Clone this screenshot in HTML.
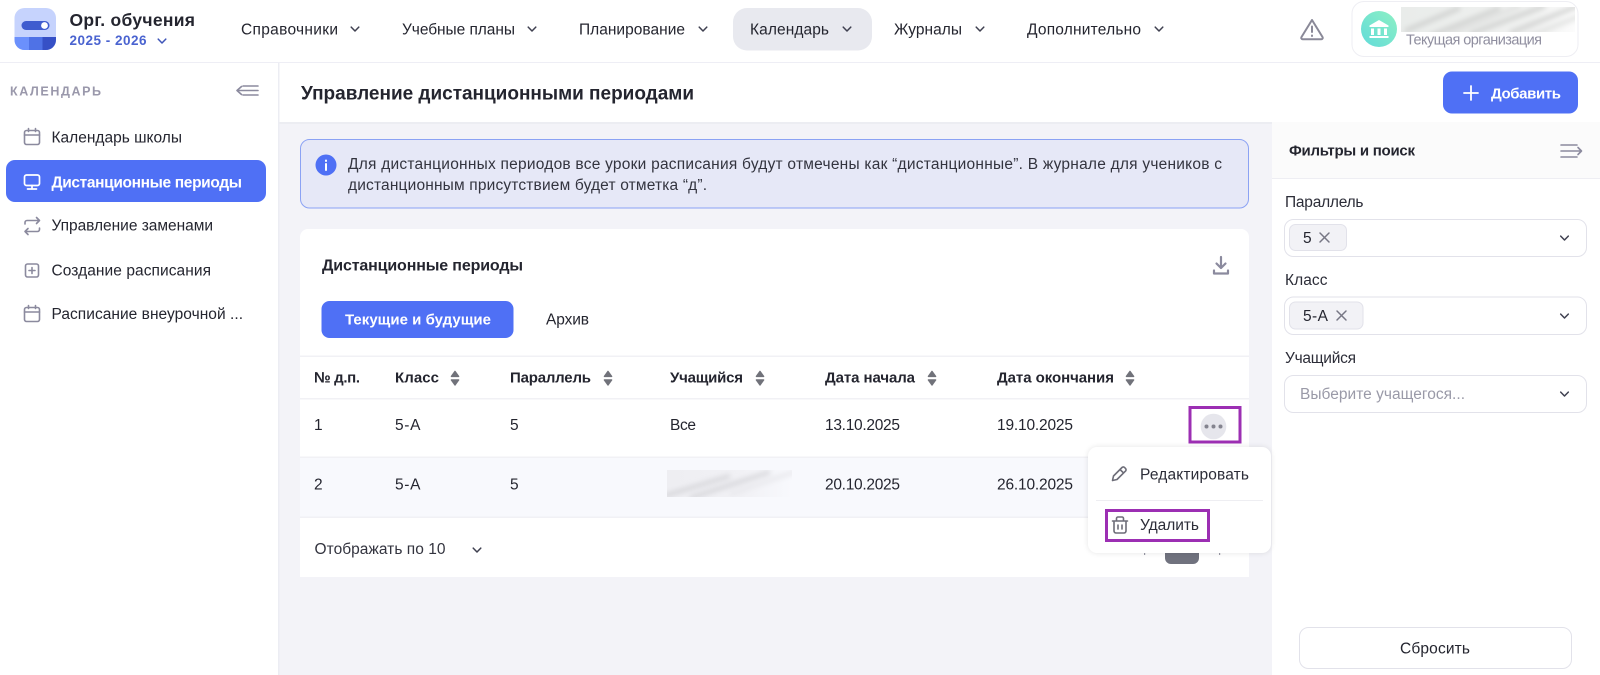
<!DOCTYPE html>
<html lang="ru"><head><meta charset="utf-8"><title>Управление дистанционными периодами</title>
<style>
html,body{margin:0;padding:0;background:#fff;width:1600px;height:675px;overflow:hidden}
svg{display:block;font-family:"Liberation Sans",sans-serif;filter:blur(.35px)}
text{fill:#24252f;font-size:15.5px;stroke:none}
.b{font-weight:700}
.ic{fill:none;stroke:#8b8a9e;stroke-width:1.6;stroke-linecap:round;stroke-linejoin:round}
.ch{fill:none;stroke:#3f4050;stroke-width:1.5;stroke-linecap:round;stroke-linejoin:round}
</style></head><body>
<svg width="1600" height="675" viewBox="0 0 1600 675" xmlns="http://www.w3.org/2000/svg">
<defs>
<filter id="bl" x="-10%" y="-30%" width="120%" height="160%"><feGaussianBlur stdDeviation="2.6"/></filter>
<clipPath id="orgclip"><rect x="1401" y="7" width="174" height="25"/></clipPath>
<clipPath id="stuclip"><rect x="667" y="470" width="125" height="27"/></clipPath>
<clipPath id="logoclip"><rect x="14.5" y="8" width="41.5" height="42" rx="10"/></clipPath>
<linearGradient id="av" x1="0" y1="1" x2="1" y2="0"><stop offset="0" stop-color="#62dbd9"/><stop offset="1" stop-color="#8df0c4"/></linearGradient>
<linearGradient id="orgbg" x1="0" y1="0" x2="1" y2="0"><stop offset="0" stop-color="#e9ecea"/><stop offset=".75" stop-color="#f0f1f0"/><stop offset="1" stop-color="#fcfcfc"/></linearGradient>
<linearGradient id="stubg" x1="0" y1="0" x2="1" y2="0"><stop offset="0" stop-color="#eeeef2"/><stop offset=".6" stop-color="#f1f1f5"/><stop offset="1" stop-color="#f8f9fd"/></linearGradient>
<g id="chev"><path d="M-3.8 -1.9 L0 2 L3.8 -1.9"/></g>
<g id="sort"><path d="M0 -6.6 L3.6 -1.6 H-3.6 Z M0 7 L3.6 2 H-3.6 Z" fill="#71727a" stroke="#71727a" stroke-width="1.4" stroke-linejoin="round"/></g>
<g id="cal"><rect x="-7.5" y="-6.5" width="15" height="14" rx="2"/><path d="M-7.5 -2 H7.5 M-3.5 -8.5 V-5.5 M3.5 -8.5 V-5.5"/></g>
</defs>

<!-- backgrounds -->
<rect width="1600" height="675" fill="#fff"/>
<rect x="279" y="122" width="993" height="553" fill="#f3f3f8"/>
<rect x="279" y="122" width="993" height="2" fill="#ecedf2"/>
<rect x="278" y="62" width="1.5" height="613" fill="#ecedf3"/>
<rect x="0" y="62" width="1600" height="1" fill="#eeeef5"/>
<rect x="1272" y="122" width="328" height="56" fill="#fbfbfb"/>
<rect x="1272" y="178" width="328" height="1" fill="#eeeef3"/>

<!-- logo -->
<g clip-path="url(#logoclip)">
<rect x="14.5" y="8" width="41.5" height="42" fill="#c6d3fd"/>
<rect x="14.5" y="37" width="14.5" height="13" fill="#6b90fc"/>
<rect x="29" y="37" width="13.5" height="13" fill="#4f72e6"/>
<rect x="42.5" y="37" width="13.5" height="13" fill="#3650c6"/>
</g>
<rect x="21.5" y="21" width="28" height="9" rx="4.5" fill="#3f5ccf"/>
<circle cx="44.5" cy="25.5" r="3.4" fill="#fff"/>
<text x="69.5" y="26" class="b" style="font-size:17.5px" textLength="125.5" lengthAdjust="spacing">Орг. обучения</text>
<text x="69.5" y="45" class="b" style="font-size:13.5px;fill:#4a63d0" textLength="77" lengthAdjust="spacing">2025 - 2026</text>
<use href="#chev" x="162" y="41" class="ch" style="stroke:#3f55b8"/>

<!-- nav -->
<rect x="733" y="8" width="139" height="42.5" rx="14" fill="#e8e9ef"/>
<text x="241" y="34.5" textLength="97" lengthAdjust="spacing">Справочники</text>
<use href="#chev" x="355" y="29" class="ch"/>
<text x="402" y="34.5" textLength="113" lengthAdjust="spacing">Учебные планы</text>
<use href="#chev" x="532" y="29" class="ch"/>
<text x="579" y="34.5" textLength="106" lengthAdjust="spacing">Планирование</text>
<use href="#chev" x="703" y="29" class="ch"/>
<text x="750" y="34.5" textLength="79" lengthAdjust="spacing">Календарь</text>
<use href="#chev" x="847" y="29" class="ch"/>
<text x="894" y="34.5" textLength="68" lengthAdjust="spacing">Журналы</text>
<use href="#chev" x="980" y="29" class="ch"/>
<text x="1027" y="34.5" textLength="114" lengthAdjust="spacing">Дополнительно</text>
<use href="#chev" x="1159" y="29" class="ch"/>

<!-- warning -->
<path d="M1312 20 L1322.5 37 a1.5 1.5 0 0 1 -1.3 2.3 H1302.8 a1.5 1.5 0 0 1 -1.3 -2.3 Z" fill="none" stroke="#8a8998" stroke-width="2" stroke-linejoin="round"/>
<path d="M1312 26.5 V32 M1312 35.5 V36" fill="none" stroke="#8a8998" stroke-width="2" stroke-linecap="round"/>

<!-- org -->
<rect x="1352" y="1.5" width="226" height="55" rx="12" fill="#fff" stroke="#eeeef3"/>
<circle cx="1379" cy="29" r="18" fill="url(#av)"/>
<path d="M1379 20 L1388.5 25.5 V27 H1369.5 V25.5 Z M1371 28.5 H1374 V35 H1371 Z M1377.5 28.5 H1380.5 V35 H1377.5 Z M1384 28.5 H1387 V35 H1384 Z M1369.5 36 H1388.5 V38 H1369.5 Z" fill="#fff"/>
<g clip-path="url(#orgclip)">
<rect x="1401" y="7" width="174" height="25" fill="url(#orgbg)"/>
<g filter="url(#bl)" fill="none" stroke="#c9cac9" stroke-width="3.5">
<path d="M1405 31 L1460 8 M1430 36 L1500 8 M1470 34 L1545 6 M1510 33 L1580 5" />
<path d="M1450 34 L1520 6 M1530 36 L1590 12" stroke="#dcdddc"/>
</g>
</g>
<text x="1406" y="44.5" style="font-size:14.5px;fill:#8f8e9f" textLength="136" lengthAdjust="spacing">Текущая организация</text>

<!-- sidebar -->
<text x="10" y="95.5" class="b" style="font-size:12.5px;fill:#9a98ab" textLength="91" lengthAdjust="spacing">КАЛЕНДАРЬ</text>
<path d="M237 90.5 H258 M243 86 H258 M243 95 H258 M241.5 86.5 L237 90.5 L241.5 94.5" class="ic"/>
<rect x="6" y="160" width="260" height="42" rx="9" fill="#4f70f5"/>
<use href="#cal" x="32" y="137" class="ic"/>
<text x="51.5" y="142.5" textLength="130.5" lengthAdjust="spacing">Календарь школы</text>
<g fill="none" stroke="#fff" stroke-width="1.7" stroke-linecap="round" stroke-linejoin="round"><rect x="24.5" y="175" width="15" height="10.5" rx="2"/><path d="M32 185.5 V189 M27.5 189 H36.5"/></g>
<text x="51.5" y="187.5" class="b" style="fill:#fff" textLength="190.5" lengthAdjust="spacing">Дистанционные периоды</text>
<path d="M25 224 V222.5 a2 2 0 0 1 2 -2 H39.5 M36.5 217.5 L39.5 220.5 L36.5 223.5 M39.5 228 V229.5 a2 2 0 0 1 -2 2 H25 M28 228.5 L25 231.5 L28 234.5" class="ic"/>
<text x="51.5" y="230.5" textLength="161.5" lengthAdjust="spacing">Управление заменами</text>
<rect x="25.5" y="264" width="13" height="13" rx="2" class="ic"/>
<path d="M32 267.5 V273.5 M29 270.5 H35" class="ic"/>
<text x="51.5" y="275.5" textLength="159.5" lengthAdjust="spacing">Создание расписания</text>
<use href="#cal" x="32" y="314" class="ic"/>
<text x="51.5" y="319" textLength="191.5" lengthAdjust="spacing">Расписание внеурочной ...</text>

<!-- page head -->
<text x="301" y="99.5" class="b" style="font-size:19px" textLength="393" lengthAdjust="spacing">Управление дистанционными периодами</text>
<rect x="1443" y="71.5" width="135" height="42" rx="9" fill="#4f70f5"/>
<path d="M1471 86 V100 M1464 93 H1478" stroke="#fff" stroke-width="1.8" stroke-linecap="round"/>
<text x="1491" y="98.5" class="b" style="font-size:15px;fill:#fff" textLength="70" lengthAdjust="spacing">Добавить</text>

<!-- alert -->
<rect x="300.5" y="139.5" width="948" height="68.5" rx="9" fill="#e6e8f7" stroke="#8ba2f4"/>
<circle cx="326" cy="165" r="10.5" fill="#4f70f5"/>
<path d="M326 164 V170 M326 160.5 V161" stroke="#fff" stroke-width="2" stroke-linecap="round"/>
<text x="348" y="169" style="fill:#33343f" textLength="874" lengthAdjust="spacing">Для дистанционных периодов все уроки расписания будут отмечены как “дистанционные”. В журнале для учеников с</text>
<text x="348" y="190" style="fill:#33343f" textLength="359" lengthAdjust="spacing">дистанционным присутствием будет отметка “д”.</text>

<!-- card -->
<path d="M300 577 V237 a8 8 0 0 1 8 -8 H1241 a8 8 0 0 1 8 8 V577 Z" fill="#fff"/>
<text x="322" y="270.5" class="b" style="font-size:16px" textLength="201" lengthAdjust="spacing">Дистанционные периоды</text>
<path d="M1221 257 V268 M1216.5 263.5 L1221 268 L1225.5 263.5 M1214 270.5 V273.5 H1228 V270.5" fill="none" stroke="#8b8a9e" stroke-width="2.2" stroke-linecap="round" stroke-linejoin="round"/>
<rect x="321.5" y="301" width="192" height="37" rx="8" fill="#4f70f5"/>
<text x="345" y="324.5" class="b" style="fill:#fff;font-size:15px" textLength="146" lengthAdjust="spacing">Текущие и будущие</text>
<text x="546" y="324.5" textLength="43" lengthAdjust="spacing">Архив</text>

<!-- table -->
<rect x="300" y="355.5" width="949" height="1.5" fill="#f1f1f5"/>
<rect x="300" y="398" width="949" height="1.5" fill="#f1f1f5"/>
<rect x="300" y="457" width="949" height="60" fill="#f8f9fd"/>
<rect x="300" y="456.5" width="949" height="1.5" fill="#f1f1f5"/>
<rect x="300" y="516.5" width="949" height="1.5" fill="#f1f1f5"/>
<text x="314" y="382.5" class="b" style="font-size:15px" textLength="46" lengthAdjust="spacing">№ д.п.</text>
<text x="395" y="382.5" class="b" style="font-size:15px" textLength="44" lengthAdjust="spacing">Класс</text>
<text x="510" y="382.5" class="b" style="font-size:15px" textLength="81" lengthAdjust="spacing">Параллель</text>
<text x="670" y="382.5" class="b" style="font-size:15px" textLength="73" lengthAdjust="spacing">Учащийся</text>
<text x="825" y="382.5" class="b" style="font-size:15px" textLength="90" lengthAdjust="spacing">Дата начала</text>
<text x="997" y="382.5" class="b" style="font-size:15px" textLength="117" lengthAdjust="spacing">Дата окончания</text>
<use href="#sort" x="455" y="378"/><use href="#sort" x="608" y="378"/><use href="#sort" x="760" y="378"/><use href="#sort" x="932" y="378"/><use href="#sort" x="1130" y="378"/>

<text x="314" y="430">1</text>
<text x="395" y="430" textLength="25.5" lengthAdjust="spacing">5-А</text>
<text x="510" y="430">5</text>
<text x="670" y="430" textLength="26" lengthAdjust="spacing">Все</text>
<text x="825" y="430" textLength="75" lengthAdjust="spacing">13.10.2025</text>
<text x="997" y="430" textLength="76" lengthAdjust="spacing">19.10.2025</text>

<text x="314" y="489.5">2</text>
<text x="395" y="489.5" textLength="25.5" lengthAdjust="spacing">5-А</text>
<text x="510" y="489.5">5</text>
<g clip-path="url(#stuclip)">
<rect x="667" y="470" width="125" height="27" fill="url(#stubg)"/>
<g filter="url(#bl)" fill="none" stroke="#d0d0d4" stroke-width="3.5">
<path d="M664 496 L730 476 M690 498 L770 472"/>
<path d="M730 494 L800 470" stroke="#e6e6ea"/>
</g>
</g>
<text x="825" y="489.5" textLength="75" lengthAdjust="spacing">20.10.2025</text>
<text x="997" y="489.5" textLength="76" lengthAdjust="spacing">26.10.2025</text>

<!-- footer -->
<text x="314.5" y="554" style="fill:#33343f" textLength="131" lengthAdjust="spacing">Отображать по 10</text>
<use href="#chev" x="477" y="550" class="ch"/>
<rect x="1165" y="535" width="34" height="29" rx="6" fill="#70727e"/>
<rect x="1144" y="551" width="1.2" height="4" fill="#9a9aa5"/>
<rect x="1219" y="551" width="1.2" height="4" fill="#9a9aa5"/>

<!-- more button -->
<rect x="1190" y="407.5" width="50" height="34.5" fill="none" stroke="#9c2fb3" stroke-width="3"/>
<circle cx="1213.5" cy="426.5" r="12.8" fill="#e6e6ec"/>
<circle cx="1206.5" cy="426.5" r="2" fill="#84848f"/><circle cx="1213.5" cy="426.5" r="2" fill="#84848f"/><circle cx="1220.5" cy="426.5" r="2" fill="#84848f"/>

<!-- popup -->
<rect x="1088" y="447" width="183" height="106" rx="9" fill="#000" opacity=".10" style="filter:blur(3px)"/>
<rect x="1088" y="447" width="183" height="106" rx="9" fill="#fff"/>
<path d="M1112.5 480.5 L1113.5 476 L1122 467.5 a1.8 1.8 0 0 1 2.6 0 L1125.5 468.5 a1.8 1.8 0 0 1 0 2.6 L1117 479.5 Z M1120 469.5 L1123.8 473.2" fill="none" stroke="#6d6d78" stroke-width="1.6" stroke-linejoin="round"/>
<text x="1140" y="479.5" style="fill:#2c2d38" textLength="109" lengthAdjust="spacing">Редактировать</text>
<rect x="1096" y="500" width="167" height="1" fill="#eeeef2"/>
<rect x="1106.5" y="510.5" width="102" height="30" fill="none" stroke="#9c2fb3" stroke-width="3"/>
<path d="M1112.5 521 H1127.5 M1114 521 V531 a2 2 0 0 0 2 2 H1124 a2 2 0 0 0 2 -2 V521 M1116.5 521 V518.5 a1.5 1.5 0 0 1 1.5 -1.5 H1122 a1.5 1.5 0 0 1 1.5 1.5 V521 M1118 525 V529 M1122 525 V529" fill="none" stroke="#6d6d78" stroke-width="1.6" stroke-linecap="round" stroke-linejoin="round"/>
<text x="1140" y="530" style="fill:#2c2d38" textLength="59" lengthAdjust="spacing">Удалить</text>

<!-- filters -->
<text x="1289" y="155.5" class="b" style="font-size:15px" textLength="126" lengthAdjust="spacing">Фильтры и поиск</text>
<path d="M1561 145 H1577 M1561 151 H1581 M1561 157 H1577 M1578 147.5 L1581.5 151 L1578 154.5" class="ic"/>

<text x="1285" y="207" style="fill:#2c2d38" textLength="78.5" lengthAdjust="spacing">Параллель</text>
<rect x="1284.5" y="219.5" width="302" height="37" rx="9" fill="#fff" stroke="#e2e2ea"/>
<rect x="1289.5" y="224.5" width="57" height="26" rx="6" fill="#f2f2f6" stroke="#e2e2ea"/>
<text x="1303" y="243">5</text>
<path d="M1320 233 L1329 242 M1329 233 L1320 242" stroke="#777784" stroke-width="1.5" stroke-linecap="round"/>
<use href="#chev" x="1564.5" y="238" class="ch"/>

<text x="1285" y="285" style="fill:#2c2d38" textLength="42.5" lengthAdjust="spacing">Класс</text>
<rect x="1284.5" y="297" width="302" height="37.5" rx="9" fill="#fff" stroke="#e2e2ea"/>
<rect x="1289.5" y="302" width="73.5" height="27" rx="6" fill="#f2f2f6" stroke="#e2e2ea"/>
<text x="1303" y="321" textLength="25" lengthAdjust="spacing">5-А</text>
<path d="M1337 311 L1346 320 M1346 311 L1337 320" stroke="#777784" stroke-width="1.5" stroke-linecap="round"/>
<use href="#chev" x="1564.5" y="316" class="ch"/>

<text x="1285" y="363" style="fill:#2c2d38" textLength="71" lengthAdjust="spacing">Учащийся</text>
<rect x="1284.5" y="375.5" width="302" height="37" rx="9" fill="#fff" stroke="#e2e2ea"/>
<text x="1300" y="399" style="fill:#9a9aa8" textLength="165" lengthAdjust="spacing">Выберите учащегося...</text>
<use href="#chev" x="1564.5" y="394" class="ch"/>

<rect x="1299.5" y="627.5" width="272" height="41" rx="9" fill="#fff" stroke="#e2e2ea"/>
<text x="1400" y="653.5" style="fill:#24252f" textLength="70" lengthAdjust="spacing">Сбросить</text>
</svg>
</body></html>
